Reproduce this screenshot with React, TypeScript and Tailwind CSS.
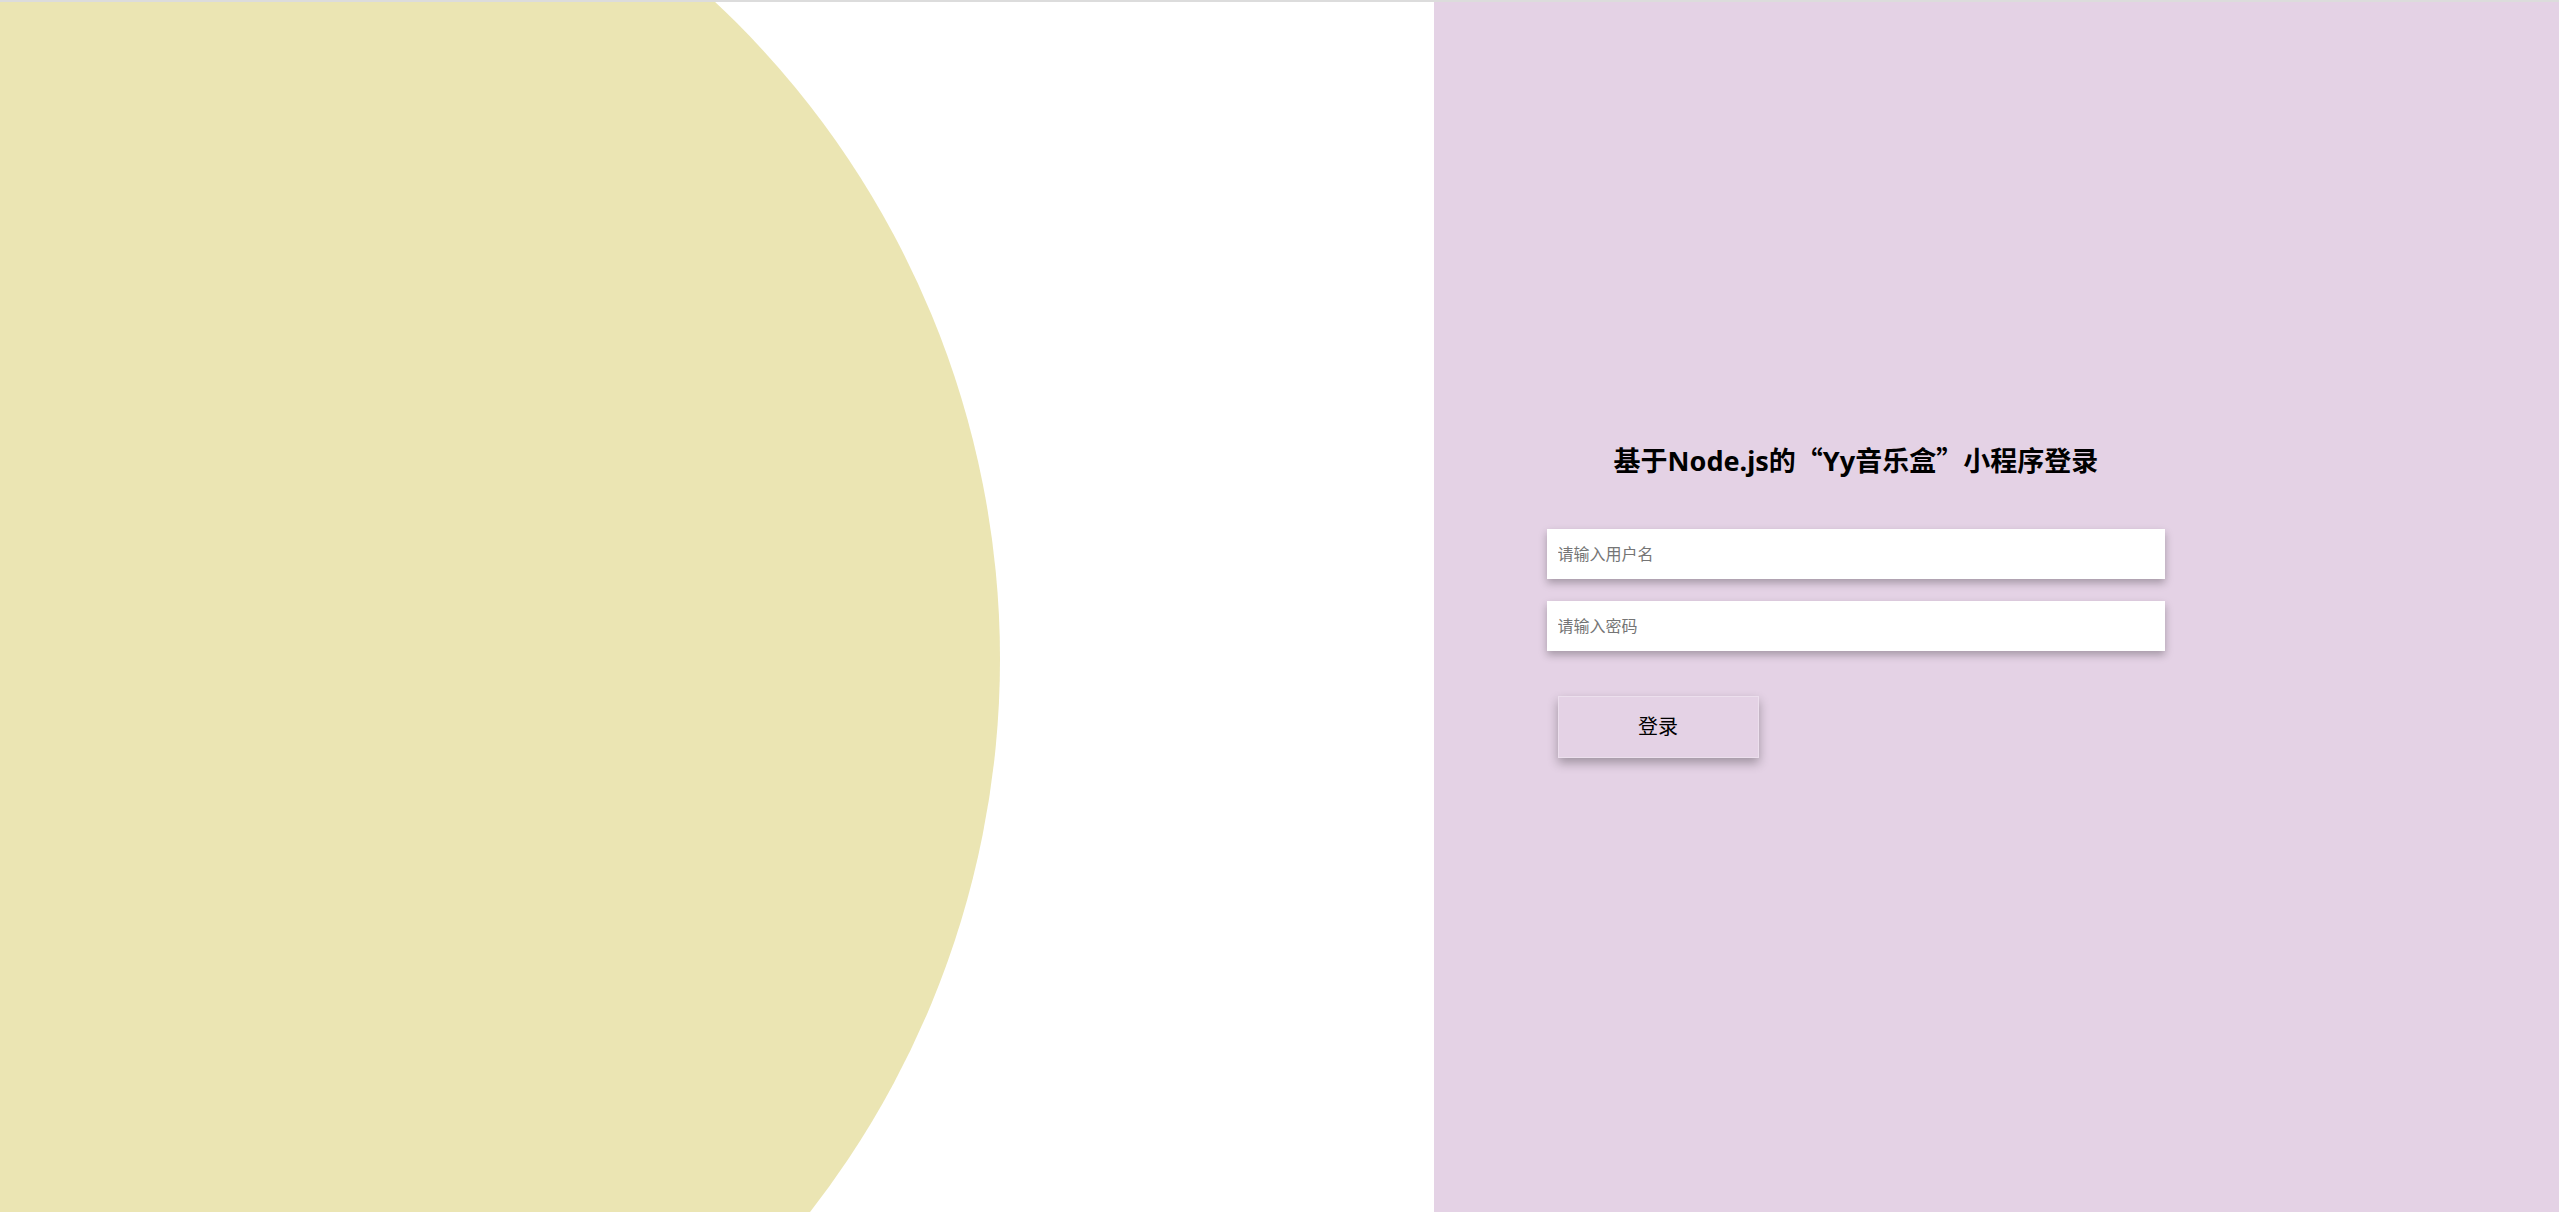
import React from "react";

export default function App() {
  return (
    <div className="flex h-[1212px] w-full flex-col overflow-hidden bg-white font-['Noto_Sans','Noto_Sans_CJK_SC',sans-serif]">
      {/* top hairline */}
      <div className="h-[2px] w-full shrink-0 bg-[#dcdcdc]" />

      <div className="flex min-h-0 flex-1">
        {/* left decorative side */}
        <div className="relative w-[1434px] shrink-0 overflow-hidden bg-white">
          <div className="absolute left-[-800px] top-[-243px] h-[1800px] w-[1800px] rounded-full bg-[#ebe5b3]" />
        </div>

        {/* login side */}
        <div className="flex-1 bg-[#e4d2e5]">
          <div className="ml-[10%] flex w-[55%] flex-col pt-[438px]">
            <h1 className="h-[39px] text-center text-[27px] font-bold leading-[39px] text-black">
              基于Node.js的
              <span className="font-['Noto_Sans_CJK_SC',sans-serif]">“</span>
              Yy音乐盒
              <span className="font-['Noto_Sans_CJK_SC',sans-serif]">”</span>
              小程序登录
            </h1>

            <input
              type="text"
              placeholder="请输入用户名"
              className="mt-[50px] h-[50px] w-full bg-white px-[11px] text-[16px] text-black shadow-[0_4px_8px_rgba(0,0,0,0.28)] outline-none placeholder:text-[#757575]"
            />
            <input
              type="password"
              placeholder="请输入密码"
              className="mt-[22px] h-[50px] w-full bg-white px-[11px] text-[16px] text-black shadow-[0_4px_8px_rgba(0,0,0,0.28)] outline-none placeholder:text-[#757575]"
            />

            <button className="ml-[11px] mt-[45px] h-[62px] w-[201px] border border-[#ecdfed] bg-[#e4d2e5] text-[20px] text-black shadow-[0_5px_10px_rgba(0,0,0,0.3)]">
              登录
            </button>
          </div>
        </div>
      </div>
    </div>
  );
}
